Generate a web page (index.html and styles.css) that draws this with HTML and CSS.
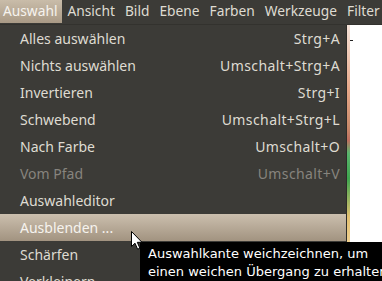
FILE: index.html
```html
<!DOCTYPE html>
<html>
<head>
<meta charset="utf-8">
<link rel="stylesheet" href="styles.css">
</head>
<body>
<div class="menubar">
  <span class="mb-item active">Auswahl</span>
  <span class="mb-item">Ansicht</span>
  <span class="mb-item">Bild</span>
  <span class="mb-item">Ebene</span>
  <span class="mb-item">Farben</span>
  <span class="mb-item">Werkzeuge</span>
  <span class="mb-item">Filter</span>
</div>
<div class="main">
  <div class="menu">
    <div class="row"><span>Alles auswählen</span><span>Strg+A</span></div>
    <div class="row"><span>Nichts auswählen</span><span>Umschalt+Strg+A</span></div>
    <div class="row"><span>Invertieren</span><span>Strg+I</span></div>
    <div class="row"><span>Schwebend</span><span>Umschalt+Strg+L</span></div>
    <div class="row"><span>Nach Farbe</span><span>Umschalt+O</span></div>
    <div class="row disabled"><span>Vom Pfad</span><span>Umschalt+V</span></div>
    <div class="row"><span>Auswahleditor</span><span></span></div>
    <div class="row selected"><span>Ausblenden ...</span><span></span></div>
    <div class="row"><span>Schärfen</span><span></span></div>
    <div class="row"><span>Verkleinern ...</span><span></span></div>
  </div>
  <div class="canvas">
    <div class="strip"></div>
    <div class="paper"><div class="tick"></div></div>
  </div>
</div>
<div class="tooltip">Auswahlkante weichzeichnen, um<br>einen weichen Übergang zu erhalten</div>
<svg class="cursor" width="13" height="20" viewBox="0 0 13 20">
  <path d="M0.5 0.5 L0.5 15.5 L4 12.2 L6.6 18.2 L8.9 17.2 L6.3 11.3 L11 11.3 Z" fill="#fff" stroke="#000" stroke-width="1" stroke-linejoin="round"/>
</svg>
</body>
</html>
```

FILE: styles.css
```css
html, body {
  margin: 0;
  padding: 0;
  width: 382px;
  height: 281px;
  overflow: hidden;
  background: #ffffff;
  font-family: "Noto Sans", "DejaVu Sans", sans-serif;
}
.menubar {
  height: 25px;
  background: #3c3b37;
  display: flex;
  align-items: flex-start;
  white-space: nowrap;
  overflow: hidden;
  border-bottom: 1px solid #33322e;
  box-sizing: border-box;
}
.mb-item {
  height: 23px;
  line-height: 21px;
  font-size: 13.75px;
  color: #dfdbd2;
  padding: 0 5px;
}
.mb-item.active {
  background: linear-gradient(#c9bca9, #a99a86);
  color: #f6f3ee;
  padding: 0 5px 0 3px;
}
.main {
  display: flex;
  height: 256px;
}
.menu {
  width: 346px;
  background: #3c3b37;
  border-right: 1px solid #2d2c29;
  flex: none;
}
.row {
  height: 27px;
  display: flex;
  justify-content: space-between;
  align-items: center;
  padding: 0 6px 0 20px;
  font-size: 14px;
  color: #dfdbd2;
  white-space: nowrap;
}
.row span + span {
  letter-spacing: 0.4px;
}
.row.disabled {
  color: #87847e;
}
.row.selected {
  background: linear-gradient(#cbbfae, #a29380);
  color: #f6f3ee;
}
.canvas {
  flex: 1;
  display: flex;
}
.strip {
  width: 3px;
  background: linear-gradient(#f4e2d8 0%, #e8a98a 25%, #c98a6a 40%, #c07060 45%, #5ab66e 50%, #3fa64f 60%, #e3c070 75%, #f0d090 85%, #ffffff 100%);
}
.paper {
  flex: 1;
  background: #ffffff;
  position: relative;
}
.tick {
  position: absolute;
  left: 0;
  top: 15px;
  width: 3px;
  height: 1px;
  background: #222;
}
.tooltip {
  position: absolute;
  left: 140px;
  top: 242px;
  width: 260px;
  height: 50px;
  background: #000000;
  color: #ffffff;
  font-family: "DejaVu Sans", sans-serif;
  font-size: 13px;
  line-height: 18px;
  padding: 3px 0 0 8px;
  white-space: nowrap;
  box-sizing: border-box;
}
.cursor {
  position: absolute;
  left: 131px;
  top: 231px;
}
```
